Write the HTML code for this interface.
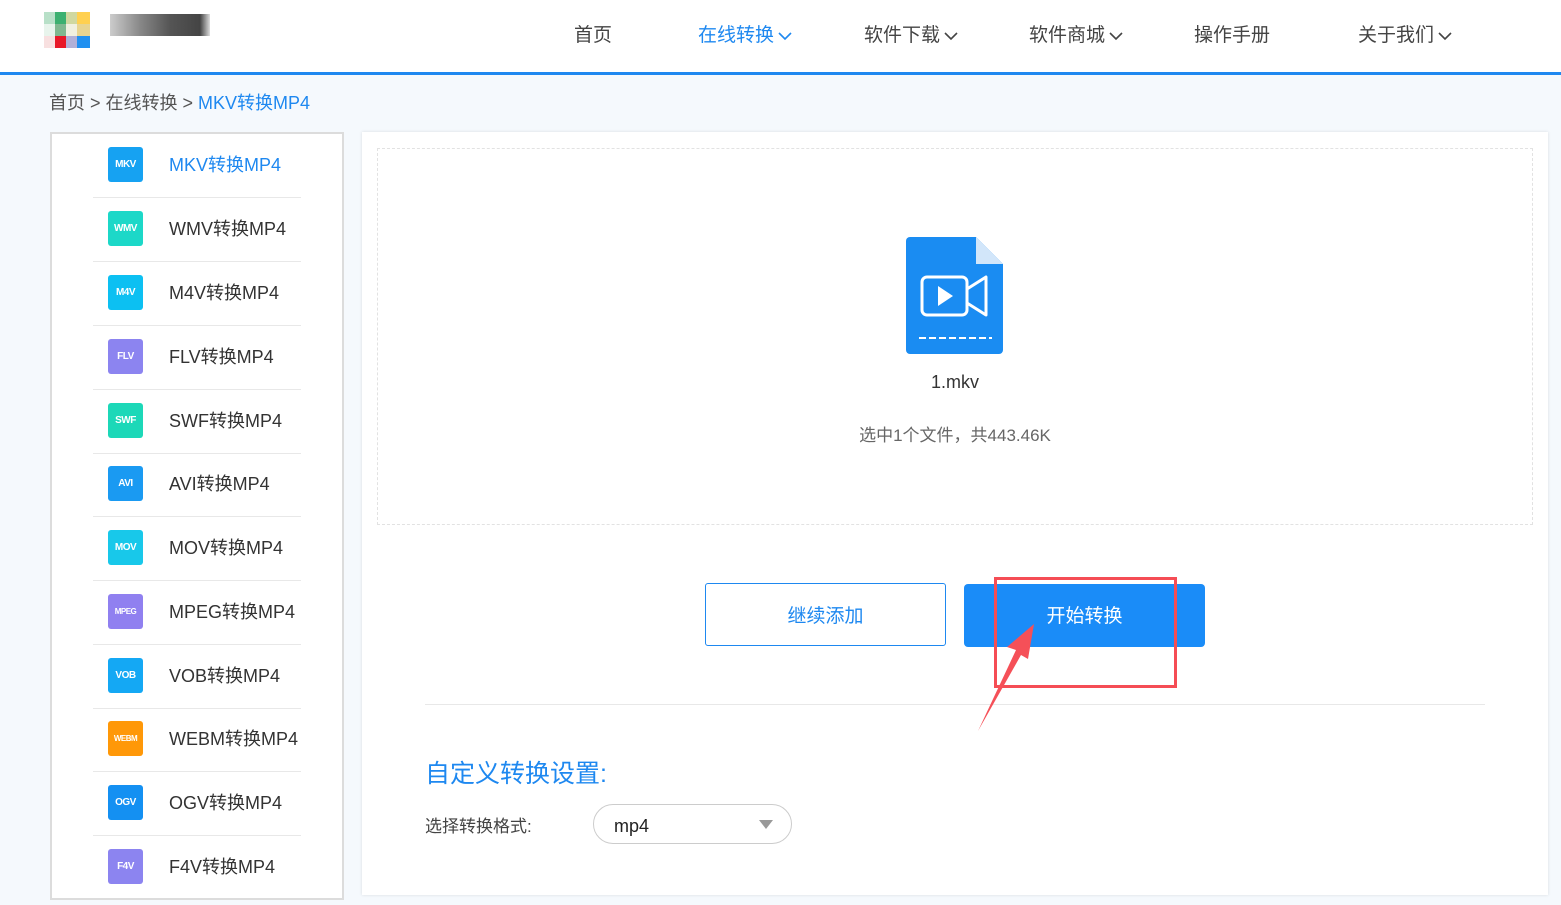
<!DOCTYPE html>
<html><head><meta charset="utf-8"><style>
*{margin:0;padding:0;box-sizing:border-box}
body{width:1561px;height:905px;overflow:hidden;background:#f5f9fd;font-family:"Liberation Sans","Noto Sans CJK SC",sans-serif;position:relative;color:#333}
.hdr{position:absolute;left:0;top:0;width:1561px;height:75px;background:#fff;border-bottom:3px solid #1e88f0}
.nav{position:absolute;top:20px;font-size:19px;color:#444}
.nav svg{vertical-align:middle;margin-left:4px}
.a{position:absolute}
.side{position:absolute;left:50px;top:132px;width:294px;height:768px;background:#fff;border:2px solid #dcdcdc}
.it{position:absolute;left:41px;width:208px;height:64px;border-bottom:1px solid #e8e8e8}
.ic{position:absolute;left:15px;top:13px;width:35px;height:35px;border-radius:3px;color:#fff;font-size:10px;font-weight:bold;text-align:center;line-height:35px;letter-spacing:-0.5px}
.tx{position:absolute;left:76px;top:17px;font-size:18px;color:#333;white-space:nowrap}
.main{position:absolute;left:362px;top:132px;width:1186px;height:763px;background:#fff;box-shadow:0 0 3px rgba(0,0,0,.12)}
</style></head><body>
<div class="hdr">
 <div class="a" style="left:44px;top:12px;width:46px;height:40px;background:
 linear-gradient(90deg,#b8e0c8 0 11px,#3cb070 11px 22px,#d0d8a0 22px 33px,#ffd050 33px) 0 0/46px 12px no-repeat,
 linear-gradient(90deg,#e8f4ec 0 11px,#80b890 11px 22px,#f0f0e0 22px 33px,#e8d490 33px) 0 12px/46px 12px no-repeat,
 linear-gradient(90deg,#f8e0e0 0 11px,#e81828 11px 22px,#b0b0d8 22px 33px,#2090f0 33px) 0 24px/46px 12px no-repeat"></div>
 <div class="a" style="left:110px;top:14px;width:100px;height:22px;background:linear-gradient(90deg,#ccc,#888 30%,#555 60%,#444 90%,#ddd)"></div>
 <div class="nav" style="left:574px">首页</div>
 <div class="nav" style="left:698px;color:#1e88f0">在线转换<svg width="14" height="10"><path d="M1 2l6 6 6-6" stroke="#1e88f0" stroke-width="1.6" fill="none"/></svg></div>
 <div class="nav" style="left:864px">软件下载<svg width="14" height="10"><path d="M1 2l6 6 6-6" stroke="#444" stroke-width="1.6" fill="none"/></svg></div>
 <div class="nav" style="left:1029px">软件商城<svg width="14" height="10"><path d="M1 2l6 6 6-6" stroke="#444" stroke-width="1.6" fill="none"/></svg></div>
 <div class="nav" style="left:1194px">操作手册</div>
 <div class="nav" style="left:1358px">关于我们<svg width="14" height="10"><path d="M1 2l6 6 6-6" stroke="#444" stroke-width="1.6" fill="none"/></svg></div>
</div>
<div class="a" style="left:49px;top:89px;font-size:18px;color:#555">首页 &gt; 在线转换 &gt; <span style="color:#1e88f0">MKV转换MP4</span></div>
<div class="side">
 <div class="it" style="top:0"><div class="ic" style="background:#16a2f2">MKV</div><div class="tx" style="color:#1e88f0">MKV转换MP4</div></div>
 <div class="it" style="top:64px"><div class="ic" style="background:#1cd8c8">WMV</div><div class="tx">WMV转换MP4</div></div>
 <div class="it" style="top:128px"><div class="ic" style="background:#0cc0f2">M4V</div><div class="tx">M4V转换MP4</div></div>
 <div class="it" style="top:192px"><div class="ic" style="background:#8c84f0">FLV</div><div class="tx">FLV转换MP4</div></div>
 <div class="it" style="top:256px"><div class="ic" style="background:#1cd8b8">SWF</div><div class="tx">SWF转换MP4</div></div>
 <div class="it" style="top:319px"><div class="ic" style="background:#1a9af2">AVI</div><div class="tx">AVI转换MP4</div></div>
 <div class="it" style="top:383px"><div class="ic" style="background:#18c8ea">MOV</div><div class="tx">MOV转换MP4</div></div>
 <div class="it" style="top:447px"><div class="ic" style="background:#9080f0;font-size:8px">MPEG</div><div class="tx">MPEG转换MP4</div></div>
 <div class="it" style="top:511px"><div class="ic" style="background:#14a8f4">VOB</div><div class="tx">VOB转换MP4</div></div>
 <div class="it" style="top:574px"><div class="ic" style="background:#ff9808;font-size:8px">WEBM</div><div class="tx">WEBM转换MP4</div></div>
 <div class="it" style="top:638px"><div class="ic" style="background:#1490f2">OGV</div><div class="tx">OGV转换MP4</div></div>
 <div class="it" style="top:702px;border:none"><div class="ic" style="background:#8c84f0">F4V</div><div class="tx">F4V转换MP4</div></div>
</div>
<div class="main">
 <div class="a" style="left:15px;top:16px;width:1156px;height:377px;border:1px dashed #e2e2e2"></div>
 <svg class="a" style="left:544px;top:105px" width="97" height="117" viewBox="0 0 97 117">
  <path d="M4 0H70L97 27V113a4 4 0 0 1-4 4H4a4 4 0 0 1-4-4V4a4 4 0 0 1 4-4z" fill="#1a8cf2"/>
  <path d="M70 0L97 27H70z" fill="#d2e6fa"/>
  <rect x="16" y="40" width="45" height="38" rx="5" fill="none" stroke="#fff" stroke-width="3"/>
  <path d="M61 52L80 40V78L61 66" fill="none" stroke="#fff" stroke-width="3" stroke-linejoin="round"/>
  <path d="M32 49L47 59L32 69z" fill="#fff"/>
  <path d="M13 101H86" stroke="#fff" stroke-width="2" stroke-dasharray="7,3"/>
 </svg>
 <div class="a" style="left:0;width:1186px;top:240px;text-align:center;font-size:18px;color:#333">1.mkv</div>
 <div class="a" style="left:0;width:1186px;top:289px;text-align:center;font-size:17px;color:#666">选中1个文件，共443.46K</div>
 <div class="a" style="left:343px;top:451px;width:241px;height:63px;border:1px solid #1e88f0;border-radius:3px;color:#1e88f0;font-size:19px;text-align:center;line-height:65px">继续添加</div>
 <div class="a" style="left:602px;top:452px;width:241px;height:63px;background:#1a8cf8;border-radius:4px;color:#fff;font-size:19px;text-align:center;line-height:66px">开始转换</div>
 <div class="a" style="left:63px;top:572px;width:1060px;height:1px;background:#e8e8e8"></div>
 <div class="a" style="left:63px;top:622px;font-size:25px;color:#1e88f0">自定义转换设置:</div>
 <div class="a" style="left:63px;top:680px;font-size:17px;color:#444">选择转换格式:</div>
 <div class="a" style="left:231px;top:672px;width:199px;height:40px;border:1px solid #ccc;border-radius:20px;font-size:18px;line-height:42px;padding-left:20px;color:#222">mp4<svg style="position:absolute;right:18px;top:15px" width="14" height="9"><path d="M0 0H14L7 9z" fill="#999"/></svg></div>
</div>
<svg class="a" style="left:0;top:0" width="1561" height="905">
 <rect x="995.5" y="578.5" width="180" height="108" fill="none" stroke="#f54d55" stroke-width="3"/>
 <path d="M978 731L1016 650L1007 647L1034 624L1028 659L1021 655Z" fill="#f55058"/>
</svg>
</body></html>
